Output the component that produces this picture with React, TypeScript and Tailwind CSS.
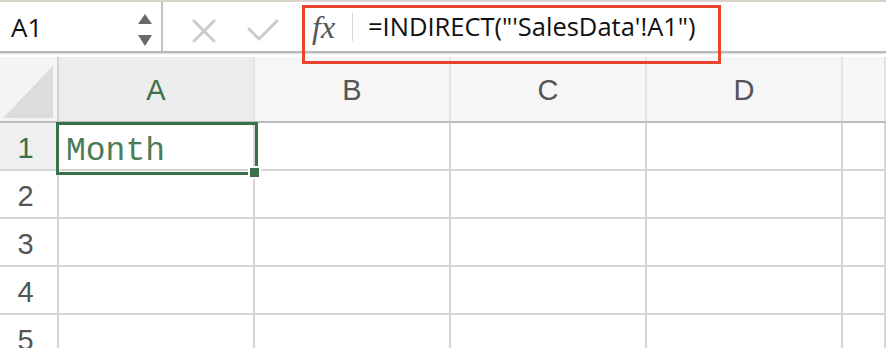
import React from 'react';

const COLS = ['A', 'B', 'C', 'D', ''];
const ROWS = [1, 2, 3, 4, 5];

const gridCols = 'grid grid-cols-[59px_196px_196px_196px_196px_1fr]';

const FormulaBar: React.FC = () => (
    <div className="flex h-[51px] border-b-2 border-[#b9b9b9] bg-white">
        {/* Name box */}
        <div className="relative w-[163px] border-r-2 border-[#c4c4c4] flex items-center">
            <span className="ml-[11px] mt-[1px] text-[26px] leading-none text-[#111] font-['Open_Sans']">A1</span>
            <svg className="absolute left-[137px] top-[11px]" width="16" height="34" viewBox="0 0 16 34">
                <polygon points="8,1 15,11 1,11" fill="#6a6a6a" />
                <polygon points="1,22 15,22 8,33" fill="#6a6a6a" />
            </svg>
        </div>

        {/* Cancel / enter */}
        <div className="relative w-[139px]">
            <svg className="absolute left-[28px] top-[16px]" width="26" height="26" viewBox="0 0 26 26">
                <path d="M3 3 L23 23 M23 3 L3 23" stroke="#cbcbcb" strokeWidth="3" strokeLinecap="round" />
            </svg>
            <svg className="absolute left-[84px] top-[16px]" width="32" height="26" viewBox="0 0 32 26">
                <path d="M2 11 L12 21 L30 3" stroke="#cbcbcb" strokeWidth="3" fill="none" strokeLinecap="round" strokeLinejoin="round" />
            </svg>
        </div>

        {/* fx + formula */}
        <div className="flex items-center flex-1">
            <span className="ml-[10px] w-[33px] text-[32px] leading-none italic text-[#555] font-['Liberation_Serif']">fx</span>
            <div className="ml-[7px] w-[1px] h-[28px] bg-[#d6d6d6]" />
            <span className="ml-[15px] text-[25.5px] leading-none text-[#111] font-['Open_Sans'] whitespace-pre">
                =INDIRECT("'SalesData'!A1")
            </span>
        </div>
    </div>
);

const App: React.FC = () => {
    return (
        <div className="relative w-[886px] h-[348px] overflow-hidden bg-white font-['Open_Sans']">
            <div className="h-[2px] bg-[#d8d4cc]" />
            <FormulaBar />
            <div className="h-[1px] bg-[#dedede]" />
            <div className="h-[3px] bg-white" />

            {/* Column headers */}
            <div className={`${gridCols} h-[66px] border-b-2 border-[#bdbdbd]`}>
                <div className="relative bg-[#f4f4f4] border-r-2 border-[#d2d2d2]">
                    <svg className="absolute left-0 top-0" width="59" height="64" viewBox="0 0 59 64">
                        <polygon points="53,9 53,61 3,61" fill="#dcdcdc" />
                    </svg>
                </div>
                {COLS.map((c, i) => (
                    <div
                        key={i}
                        className={`flex items-center justify-center pt-[3px] text-[29px] leading-none font-['Liberation_Sans'] border-r-2 border-[#e3e3e3] ${i === 0 ? 'bg-[#ececec] text-[#3b7148]' : 'bg-[#f6f6f6] text-[#555]'}`}
                    >
                        {c}
                    </div>
                ))}
            </div>

            {/* Rows */}
            {ROWS.map((r) => (
                <div key={r} className={`${gridCols} h-[48px]`}>
                    <div className={`flex items-center justify-center pt-[5px] pr-[6px] text-[29px] leading-none font-['Liberation_Sans'] border-r-2 border-b-2 border-[#d6d6d6] ${r === 1 ? 'bg-[#efefef] text-[#3b7148]' : 'bg-white text-[#555]'}`}>
                        {r}
                    </div>
                    {COLS.map((_, i) => (
                        <div key={i} className="border-r-2 border-b-2 border-[#d6d6d6] bg-white" />
                    ))}
                </div>
            ))}

            {/* Active cell A1 */}
            <div className="absolute left-[56px] top-[122px] w-[202px] h-[53px] border-[3px] border-[#3b7148] flex items-center">
                <span className="ml-[7px] mt-[5px] text-[33px] leading-none text-[#4b7c57] font-['Liberation_Mono']">Month</span>
            </div>
            <div className="absolute left-[248px] top-[166px] w-[13px] h-[13px] border-2 border-white bg-[#3b7148]" />

            {/* Highlight around formula */}
            <div className="absolute left-[302px] top-[5px] w-[419px] h-[59px] border-[3px] border-[#e8432d]" />
        </div>
    );
};

export default App;
